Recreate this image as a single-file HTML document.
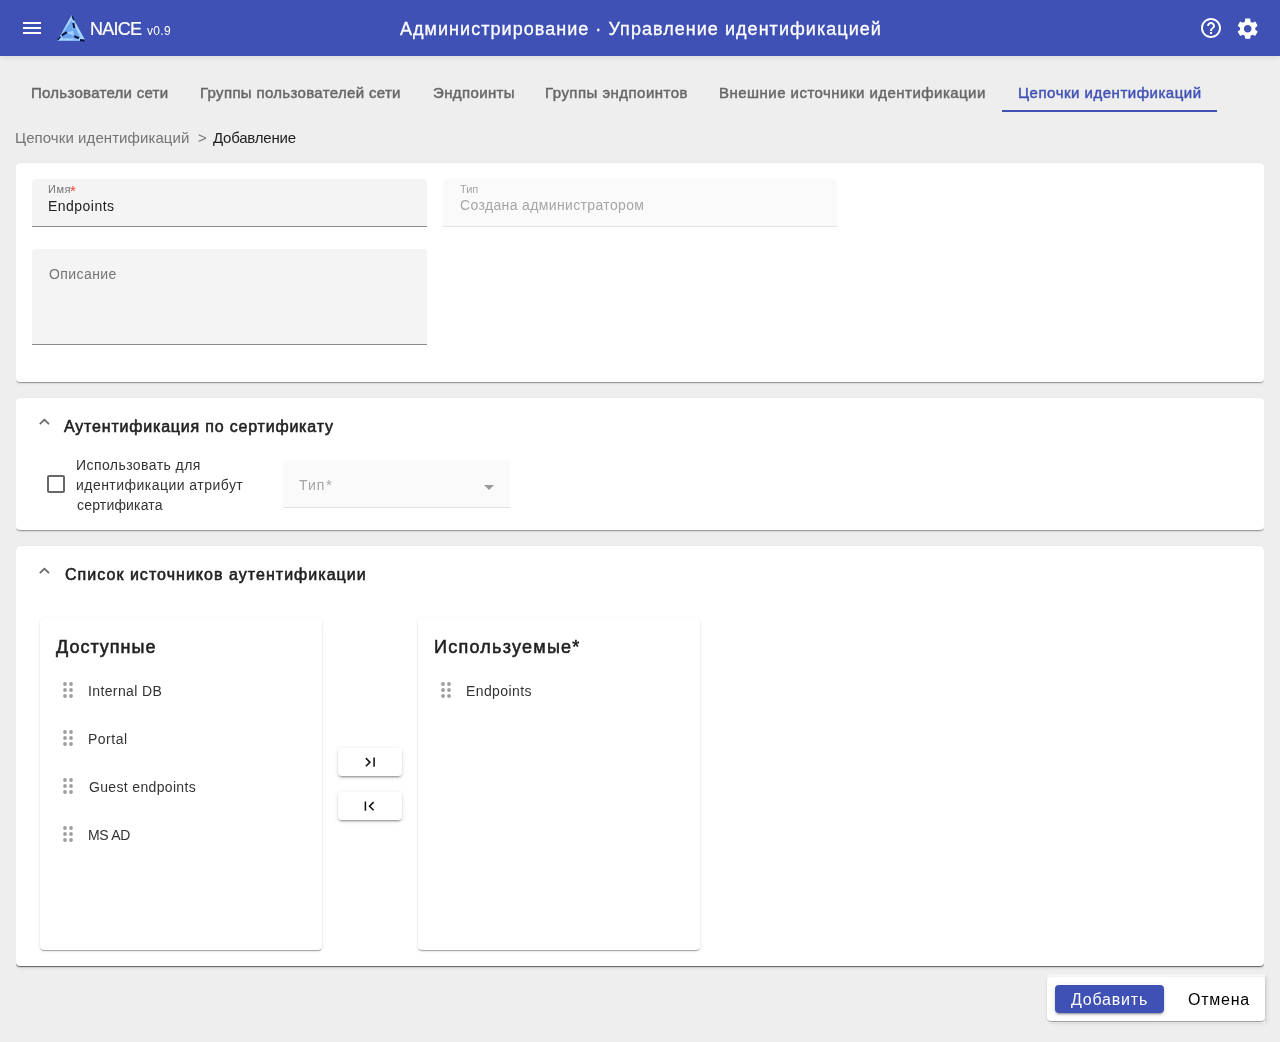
<!DOCTYPE html>
<html><head><meta charset="utf-8">
<style>
*{box-sizing:border-box;margin:0;padding:0}
html,body{width:1280px;height:1042px;overflow:hidden;background:#eeeeee;font-family:"Liberation Sans",sans-serif}
.b{position:absolute}
.t{position:absolute;white-space:nowrap;line-height:1;font-family:"Liberation Sans",sans-serif;-webkit-font-smoothing:antialiased;will-change:transform}
</style></head><body>
<div class="b" style="left:0;top:0;width:1280px;height:56px;background:#3f51b5;box-shadow:0 2px 4px rgba(0,0,0,.07)"></div>
<svg class="b" style="left:20px;top:16px" width="24" height="24" viewBox="0 0 24 24"><path fill="#fff" d="M3 18h18v-2H3v2zm0-5h18v-2H3v2zm0-7v2h18V6H3z"/></svg>
<svg class="b" style="left:52px;top:10px" width="40" height="36" viewBox="52 10 40 36">
<polygon points="71.45,15.3 57.4,40.7 85.5,40.7" fill="#a4d5fd"/>
<polygon points="72.2,19.5 72.9,30.7 66.5,32.8 60.8,35.6" fill="#6ea6f1"/>
<polygon points="60.8,35.6 66.5,32.8 74,35.8 79,38.3 63,38.5" fill="#6aa2ee"/>
<polygon points="72.9,30.7 74.5,26 80.5,37.5 74,35.8" fill="#6ca4f0"/>
<polygon points="73.5,37 80,40.7 73.5,40.7" fill="#7db6f6"/>
<g stroke="#06123c" stroke-width="2.1" stroke-linecap="butt">
<line x1="72.1" y1="16.2" x2="74" y2="20.2" stroke-width="1.4"/><line x1="73.3" y1="22.8" x2="74.2" y2="28.2"/>
<line x1="62" y1="35.4" x2="66.8" y2="32.2"/><line x1="57.9" y1="39.8" x2="60.6" y2="36.6" stroke-width="1.4"/>
<line x1="74.3" y1="36.2" x2="79" y2="38.3"/><line x1="80" y1="40.1" x2="84.8" y2="40.5"/>
</g></svg>
<div class="t" style="left:90.00px;top:20px;font-size:18px;font-weight:400;color:#fff;letter-spacing:-0.75px;-webkit-text-stroke:0.2px #fff">NAICE</div>
<div class="t" style="left:147.00px;top:25px;font-size:12px;font-weight:400;color:#fff;letter-spacing:0.333px;">v0.9</div>
<div class="t" style="left:399.75px;top:20px;font-size:18px;font-weight:400;color:#fff;letter-spacing:1.04px;-webkit-text-stroke:0.3px #fff">Администрирование · Управление идентификацией</div>
<svg class="b" style="left:1198.6px;top:15.9px" width="24" height="24" viewBox="0 0 24 24"><path fill="#fff" d="M11 18h2v-2h-2v2zm1-16C6.48 2 2 6.48 2 12s4.48 10 10 10 10-4.48 10-10S17.52 2 12 2zm0 18c-4.41 0-8-3.59-8-8s3.59-8 8-8 8 3.59 8 8-3.59 8-8 8zm0-14c-2.21 0-4 1.79-4 4h2c0-1.1.9-2 2-2s2 .9 2 2c0 2-3 1.75-3 5h2c0-2.25 3-2.5 3-5 0-2.21-1.79-4-4-4z"/></svg>
<svg class="b" style="left:1234.6px;top:15.9px" width="25.4" height="25.4" viewBox="0 0 24 24"><path fill="#fff" d="M19.14 12.94c.04-.3.06-.61.06-.94 0-.32-.02-.64-.07-.94l2.03-1.58c.18-.14.23-.41.12-.61l-1.92-3.32c-.12-.22-.37-.29-.59-.22l-2.39.96c-.5-.38-1.03-.7-1.62-.94l-.36-2.54c-.04-.24-.24-.41-.48-.41h-3.84c-.24 0-.43.17-.47.41l-.36 2.54c-.59.24-1.13.57-1.62.94l-2.39-.96c-.22-.08-.47 0-.59.22L2.74 8.87c-.12.21-.08.47.12.61l2.03 1.58c-.05.3-.09.63-.09.94s.02.64.07.94l-2.03 1.58c-.18.14-.23.41-.12.61l1.92 3.32c.12.22.37.29.59.22l2.39-.96c.5.38 1.03.7 1.62.94l.36 2.54c.05.24.24.41.48.41h3.84c.24 0 .44-.17.47-.41l.36-2.54c.59-.24 1.13-.56 1.62-.94l2.39.96c.22.08.47 0 .59-.22l1.92-3.32c.12-.22.07-.47-.12-.61l-2.01-1.58zM12 15.6c-1.98 0-3.6-1.62-3.6-3.6s1.62-3.6 3.6-3.6 3.6 1.62 3.6 3.6-1.62 3.6-3.6 3.6z"/></svg>
<div class="t" style="left:31.40px;top:85px;font-size:15px;font-weight:400;color:#666;letter-spacing:0.275px;-webkit-text-stroke:0.45px #666">Пользователи сети</div>
<div class="t" style="left:200.00px;top:85px;font-size:15px;font-weight:400;color:#666;letter-spacing:0.333px;-webkit-text-stroke:0.45px #666">Группы пользователей сети</div>
<div class="t" style="left:432.50px;top:85px;font-size:15px;font-weight:400;color:#666;letter-spacing:0.375px;-webkit-text-stroke:0.45px #666">Эндпоинты</div>
<div class="t" style="left:545.00px;top:85px;font-size:15px;font-weight:400;color:#666;letter-spacing:0.469px;-webkit-text-stroke:0.45px #666">Группы эндпоинтов</div>
<div class="t" style="left:719.00px;top:85px;font-size:15px;font-weight:400;color:#666;letter-spacing:0.467px;-webkit-text-stroke:0.45px #666">Внешние источники идентификации</div>
<div class="t" style="left:1017.75px;top:85px;font-size:15px;font-weight:400;color:#3f51b5;letter-spacing:0.513px;-webkit-text-stroke:0.45px #3f51b5">Цепочки идентификаций</div>
<div class="t" style="left:15.25px;top:130px;font-size:15px;font-weight:400;color:#757575;letter-spacing:0.075px;">Цепочки идентификаций</div>
<div class="t" style="left:197.50px;top:130px;font-size:15px;font-weight:400;color:#757575;letter-spacing:0.0px;">&gt;</div>
<div class="t" style="left:213.25px;top:130px;font-size:15px;font-weight:400;color:#212121;letter-spacing:-0.222px;">Добавление</div>
<div class="b" style="left:1002px;top:110px;width:215px;height:2px;background:#3f51b5"></div>
<div class="b" style="left:16px;top:150px;width:1248px;height:892px;overflow:hidden">
<div class="b" style="left:0;top:13px;width:1248px;height:219px;background:#fff;border-radius:4px;box-shadow:0 2px 1px -1px rgba(0,0,0,.2),0 1px 1px 0 rgba(0,0,0,.14),0 1px 3px 0 rgba(0,0,0,.12)"></div>
<div class="b" style="left:0;top:248px;width:1248px;height:132px;background:#fff;border-radius:4px;box-shadow:0 2px 1px -1px rgba(0,0,0,.2),0 1px 1px 0 rgba(0,0,0,.14),0 1px 3px 0 rgba(0,0,0,.12)"></div>
<div class="b" style="left:0;top:396px;width:1248px;height:420px;background:#fff;border-radius:4px;box-shadow:0 2px 1px -1px rgba(0,0,0,.2),0 1px 1px 0 rgba(0,0,0,.14),0 1px 3px 0 rgba(0,0,0,.12),0 1px 1px rgba(0,0,0,.3),0 2px 4px rgba(0,0,0,.06)"></div>
</div>
<div class="b" style="left:32px;top:179px;width:395px;height:48px;background:#f4f4f4;border-radius:4px 4px 0 0;border-bottom:1px solid #8a8a8a"></div>
<div class="b" style="left:443px;top:179px;width:394px;height:48px;background:#fafafa;border-radius:4px 4px 0 0;border-bottom:1px solid #e3e3e3"></div>
<div class="b" style="left:32px;top:249px;width:395px;height:96px;background:#f4f4f4;border-radius:4px 4px 0 0;border-bottom:1px solid #8a8a8a"></div>
<div class="t" style="left:47.50px;top:184px;font-size:11px;font-weight:400;color:#757575;letter-spacing:0.5px;">Имя</div>
<div class="t" style="left:70px;top:182.5px;font-size:15px;line-height:1;color:#f44336">*</div>
<div class="t" style="left:47.50px;top:199px;font-size:14px;font-weight:400;color:#212121;letter-spacing:0.475px;">Endpoints</div>
<div class="t" style="left:459.70px;top:184px;font-size:11px;font-weight:400;color:#a6a6a6;letter-spacing:-0.1px;">Тип</div>
<div class="t" style="left:459.70px;top:198px;font-size:14px;font-weight:400;color:#a6a6a6;letter-spacing:0.359px;">Создана администратором</div>
<div class="t" style="left:48.60px;top:267px;font-size:14px;font-weight:400;color:#757575;letter-spacing:0.414px;">Описание</div>
<svg class="b" style="left:36.8px;top:416.4px" width="15" height="11" viewBox="0 0 15 11"><path d="M2.8 8.2L7.4 3.6L12 8.2" fill="none" stroke="#666" stroke-width="1.7"/></svg>
<div class="t" style="left:64.20px;top:419px;font-size:16px;font-weight:400;color:#212121;letter-spacing:0.804px;-webkit-text-stroke:0.55px #212121">Аутентификация по сертификату</div>
<div class="b" style="left:47px;top:475px;width:18px;height:18px;border:2px solid #666;border-radius:2px"></div>
<div class="t" style="left:75.60px;top:458px;font-size:14px;font-weight:400;color:#333;letter-spacing:0.427px;">Использовать для</div>
<div class="t" style="left:75.60px;top:478px;font-size:14px;font-weight:400;color:#333;letter-spacing:0.465px;">идентификации атрибут</div>
<div class="t" style="left:76.60px;top:498px;font-size:14px;font-weight:400;color:#333;letter-spacing:0.18px;">сертификата</div>
<div class="b" style="left:283px;top:460px;width:227px;height:48px;background:#fafafa;border-radius:4px 4px 0 0;border-bottom:1px solid #e3e3e3"></div>
<div class="t" style="left:299.00px;top:478px;font-size:14px;font-weight:400;color:#a6a6a6;letter-spacing:0.95px;">Тип</div>
<div class="t" style="left:325.8px;top:476.8px;font-size:15px;color:#a6a6a6">*</div>
<svg class="b" style="left:484px;top:485px" width="10" height="5" viewBox="0 0 10 5"><path fill="#9a9a9a" d="M0 0h10L5 5z"/></svg>
<svg class="b" style="left:36.6px;top:564.8px" width="15" height="11" viewBox="0 0 15 11"><path d="M2.8 8.2L7.4 3.6L12 8.2" fill="none" stroke="#666" stroke-width="1.7"/></svg>
<div class="t" style="left:64.50px;top:567px;font-size:16px;font-weight:400;color:#212121;letter-spacing:1.032px;-webkit-text-stroke:0.55px #212121">Список источников аутентификации</div>
<div class="b" style="left:40px;top:618px;width:282px;height:332px;background:#fff;border-radius:4px;box-shadow:0 2px 1px -1px rgba(0,0,0,.2),0 1px 1px 0 rgba(0,0,0,.14),0 1px 3px 0 rgba(0,0,0,.12)"></div>
<div class="b" style="left:418px;top:618px;width:282px;height:332px;background:#fff;border-radius:4px;box-shadow:0 2px 1px -1px rgba(0,0,0,.2),0 1px 1px 0 rgba(0,0,0,.14),0 1px 3px 0 rgba(0,0,0,.12)"></div>
<div class="t" style="left:56.00px;top:638px;font-size:18px;font-weight:400;color:#212121;letter-spacing:1.0px;-webkit-text-stroke:0.55px #212121">Доступные</div>
<div class="t" style="left:434.00px;top:638px;font-size:18px;font-weight:400;color:#212121;letter-spacing:1.25px;-webkit-text-stroke:0.55px #212121">Используемые*</div>
<svg class="b" style="left:63px;top:682px" width="10" height="16" viewBox="0 0 10 16"><g fill="#9e9e9e"><circle cx="2" cy="2" r="1.9"/><circle cx="2" cy="8" r="1.9"/><circle cx="2" cy="14" r="1.9"/><circle cx="8" cy="2" r="1.9"/><circle cx="8" cy="8" r="1.9"/><circle cx="8" cy="14" r="1.9"/></g></svg>
<div class="t" style="left:87.75px;top:684px;font-size:14px;font-weight:400;color:#333;letter-spacing:0.375px;">Internal DB</div>
<svg class="b" style="left:63px;top:730px" width="10" height="16" viewBox="0 0 10 16"><g fill="#9e9e9e"><circle cx="2" cy="2" r="1.9"/><circle cx="2" cy="8" r="1.9"/><circle cx="2" cy="14" r="1.9"/><circle cx="8" cy="2" r="1.9"/><circle cx="8" cy="8" r="1.9"/><circle cx="8" cy="14" r="1.9"/></g></svg>
<div class="t" style="left:87.75px;top:732px;font-size:14px;font-weight:400;color:#333;letter-spacing:0.5px;">Portal</div>
<svg class="b" style="left:63px;top:778px" width="10" height="16" viewBox="0 0 10 16"><g fill="#9e9e9e"><circle cx="2" cy="2" r="1.9"/><circle cx="2" cy="8" r="1.9"/><circle cx="2" cy="14" r="1.9"/><circle cx="8" cy="2" r="1.9"/><circle cx="8" cy="8" r="1.9"/><circle cx="8" cy="14" r="1.9"/></g></svg>
<div class="t" style="left:88.75px;top:780px;font-size:14px;font-weight:400;color:#333;letter-spacing:0.339px;">Guest endpoints</div>
<svg class="b" style="left:63px;top:826px" width="10" height="16" viewBox="0 0 10 16"><g fill="#9e9e9e"><circle cx="2" cy="2" r="1.9"/><circle cx="2" cy="8" r="1.9"/><circle cx="2" cy="14" r="1.9"/><circle cx="8" cy="2" r="1.9"/><circle cx="8" cy="8" r="1.9"/><circle cx="8" cy="14" r="1.9"/></g></svg>
<div class="t" style="left:87.75px;top:828px;font-size:14px;font-weight:400;color:#333;letter-spacing:-0.312px;">MS AD</div>
<svg class="b" style="left:441px;top:682px" width="10" height="16" viewBox="0 0 10 16"><g fill="#9e9e9e"><circle cx="2" cy="2" r="1.9"/><circle cx="2" cy="8" r="1.9"/><circle cx="2" cy="14" r="1.9"/><circle cx="8" cy="2" r="1.9"/><circle cx="8" cy="8" r="1.9"/><circle cx="8" cy="14" r="1.9"/></g></svg>
<div class="t" style="left:465.60px;top:684px;font-size:14px;font-weight:400;color:#333;letter-spacing:0.4px;">Endpoints</div>
<div class="b" style="left:338px;top:748px;width:64px;height:28px;background:#fff;border-radius:4px;box-shadow:0 3px 1px -2px rgba(0,0,0,.2),0 2px 2px 0 rgba(0,0,0,.14),0 1px 5px 0 rgba(0,0,0,.12)"></div>
<div class="b" style="left:338px;top:792px;width:64px;height:28px;background:#fff;border-radius:4px;box-shadow:0 3px 1px -2px rgba(0,0,0,.2),0 2px 2px 0 rgba(0,0,0,.14),0 1px 5px 0 rgba(0,0,0,.12)"></div>
<svg class="b" style="left:360.6px;top:753px" width="18.48" height="18.48" viewBox="0 0 24 24"><path fill="#111" d="M5.59 7.41L10.18 12l-4.59 4.59L7 18l6-6-6-6zM16 6h2v12h-2z"/></svg>
<svg class="b" style="left:360.4px;top:797px" width="18.48" height="18.48" viewBox="0 0 24 24"><path fill="#111" d="M18.41 16.59L13.82 12l4.59-4.59L17 6l-6 6 6 6zM6 6h2v12H6z"/></svg>
<div class="b" style="left:1047px;top:974px;width:218px;height:49px;background:rgba(255,255,255,.45);box-shadow:3px 1px 4px -1px rgba(0,0,0,.1)"></div>
<div class="b" style="left:1047px;top:977px;width:218px;height:44px;background:#fff;border-radius:4px;box-shadow:0 2px 1px -1px rgba(0,0,0,.2),0 1px 1px 0 rgba(0,0,0,.14),0 1px 3px 0 rgba(0,0,0,.12)"></div>
<div class="b" style="left:1055px;top:985px;width:109px;height:28px;background:#3f51b5;border-radius:4px;box-shadow:0 3px 1px -2px rgba(0,0,0,.2),0 2px 2px 0 rgba(0,0,0,.14),0 1px 5px 0 rgba(0,0,0,.12)"></div>
<div class="t" style="left:1071.00px;top:992px;font-size:16px;font-weight:400;color:#fff;letter-spacing:0.8px;">Добавить</div>
<div class="t" style="left:1187.60px;top:992px;font-size:16px;font-weight:400;color:#000;letter-spacing:0.74px;">Отмена</div>
</body></html>
